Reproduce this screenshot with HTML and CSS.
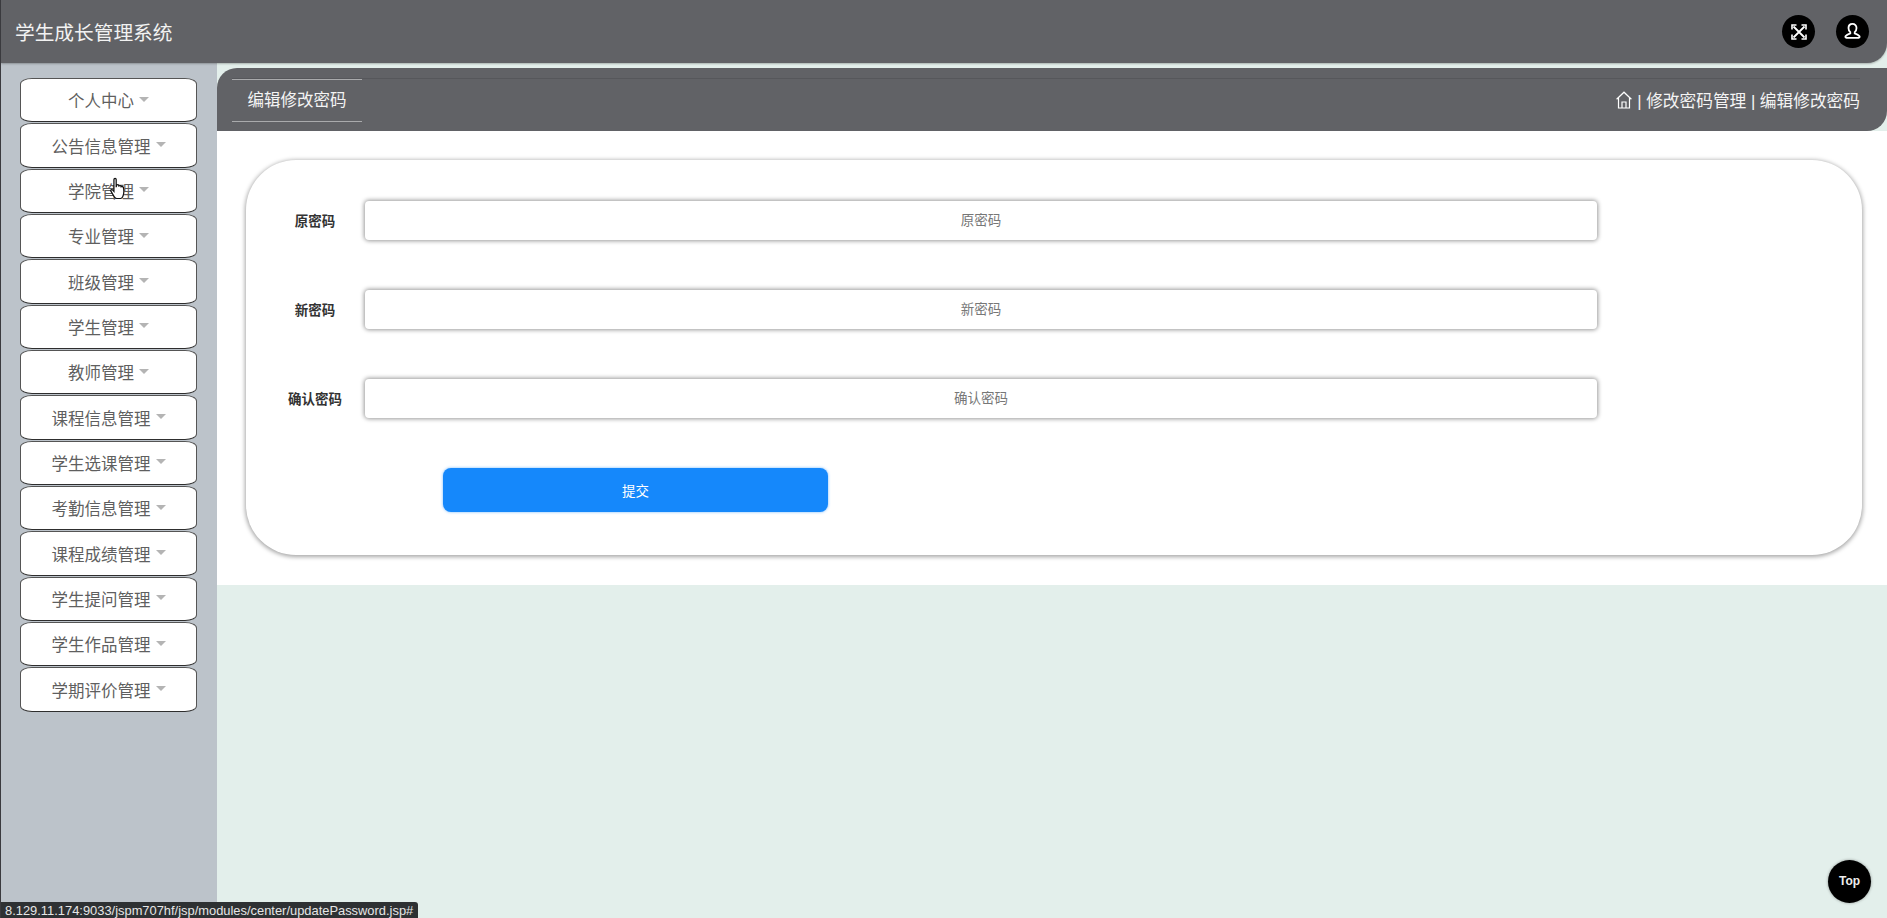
FILE: index.html
```html
<!DOCTYPE html>
<html lang="en">
<head>
  <meta charset="UTF-8">
  <meta name="viewport" content="width=device-width, initial-scale=1.0">
  <link rel="stylesheet" href="styles.css">
  <title>学生成长管理系统</title>
</head>
<body>
  <header class="topbar">
    <div class="brand">学生成长管理系统</div>
    <div class="top-actions">
      <span class="round-btn">
        <svg width="18" height="18" viewBox="0 0 18 18" fill="none" stroke="#fff" stroke-width="1.8">
          <path d="M3.500 3.500L14.500 14.500M14.500 3.500L3.500 14.500"/>
          <path d="M2 6.500V2H6.500M11.500 2H16V6.500M16 11.500V16H11.500M6.500 16H2V11.500" stroke-width="1.6"/>
        </svg>
      </span>
      <span class="round-btn">
        <svg width="19" height="19" viewBox="0 0 18 18" fill="none" stroke="#fff" stroke-width="1.7">
          <path d="M9 1.800c-2.300 0-3.800 1.700-3.800 3.900 0 1.600.7 3 1.700 3.900v1.200c-1.700.7-3.600 1.600-4.400 2.600-.5.7-.3 1.600.7 1.600h11.600c1 0 1.200-.9.7-1.600-.8-1-2.700-1.900-4.400-2.600V9.600c1-.9 1.700-2.300 1.700-3.900 0-2.200-1.500-3.900-3.800-3.900z"/>
        </svg>
      </span>
    </div>
  </header>

  <div class="layout">
    <nav class="sidebar">
      <a class="menu-item">个人中心<i class="caret"></i></a>
      <a class="menu-item">公告信息管理<i class="caret"></i></a>
      <a class="menu-item">学院管理<i class="caret"></i></a>
      <a class="menu-item">专业管理<i class="caret"></i></a>
      <a class="menu-item">班级管理<i class="caret"></i></a>
      <a class="menu-item">学生管理<i class="caret"></i></a>
      <a class="menu-item">教师管理<i class="caret"></i></a>
      <a class="menu-item">课程信息管理<i class="caret"></i></a>
      <a class="menu-item">学生选课管理<i class="caret"></i></a>
      <a class="menu-item">考勤信息管理<i class="caret"></i></a>
      <a class="menu-item">课程成绩管理<i class="caret"></i></a>
      <a class="menu-item">学生提问管理<i class="caret"></i></a>
      <a class="menu-item">学生作品管理<i class="caret"></i></a>
      <a class="menu-item">学期评价管理<i class="caret"></i></a>
    </nav>

    <main class="content">
      <div class="page-head">
        <div class="page-title">编辑修改密码</div>
        <div class="crumbs">
          <svg width="16" height="18" viewBox="0 0 16 18" fill="none" stroke="#fff" stroke-width="1.2">
            <path d="M.6 8.200L8 1.200l7.400 7M2.500 7v10h11V7M6 17v-6h4v6"/>
          </svg>
          <span>| 修改密码管理 | 编辑修改密码</span>
        </div>
      </div>

      <div class="panel">
        <form class="form-card">
          <div class="form-row">
            <label class="form-label">原密码</label>
            <input class="form-input" type="password" placeholder="原密码">
          </div>
          <div class="form-row">
            <label class="form-label">新密码</label>
            <input class="form-input" type="password" placeholder="新密码">
          </div>
          <div class="form-row">
            <label class="form-label">确认密码</label>
            <input class="form-input" type="password" placeholder="确认密码">
          </div>
          <button class="submit-btn" type="button">提交</button>
        </form>
      </div>
    </main>
  </div>

  <!-- mouse pointer caught in the screenshot -->
  <svg class="hand-cursor" width="18" height="25" viewBox="0 0 16 22" fill="#fff" stroke="#111" stroke-width="1.100">
    <path d="M3.500 2c0-1.300 2-1.300 2 0v7l.4-2c1.200-.5 1.900-.2 2 .8.900-.6 1.900-.3 2 .8.900-.5 1.900-.2 2 .8.600 2.500.6 5.500-.6 8.100-.4 1-1 1.500-2 1.500H6c-1 0-1.600-.5-2.200-1.500L.8 12.500c-.5-1 .7-2 1.700-1l1 1.200z"/>
  </svg>

  <div class="status-url">8.129.11.174:9033/jspm707hf/jsp/modules/center/updatePassword.jsp#</div>
  <a class="to-top">Top</a>
</body>
</html>
```

FILE: styles.css
```css
* {
    box-sizing: border-box;
}

html, body {
    height: 100%;
}

body {
    margin: 0;
    overflow: hidden;
    display: flex;
    flex-direction: column;
    font-family: "Liberation Sans", "Noto Sans CJK SC", sans-serif;
    background-color: #e3efeb;
    border-left: 1px solid #3a3a3e;
}

.topbar {
    flex: none;
    height: 63px;
    display: flex;
    justify-content: space-between;
    align-items: center;
    padding: 0 18px 0 14px;
    background-color: #616266;
    border-radius: 0 0 20px 0;
    box-shadow: 0 1px 2px rgba(0, 0, 0, 0.25);
    position: relative;
    z-index: 2;
}

.brand {
    color: #f2f2f2;
    font-size: 19.700px;
    padding-bottom: 1px;
}

.top-actions {
    display: flex;
    gap: 21px;
}

.round-btn {
    width: 33px;
    height: 33px;
    border-radius: 50%;
    background-color: #000;
    display: flex;
    justify-content: center;
    align-items: center;
}

.layout {
    flex: 1;
    display: flex;
    min-height: 0;
    background-color: #e3efeb;
}

.sidebar {
    flex: none;
    width: 216px;
    padding: 15px 20px 0 19px;
    display: flex;
    flex-direction: column;
    gap: 1px;
    background-color: #bcc3ca;
}

.menu-item {
    height: 44.350px;
    display: flex;
    justify-content: center;
    align-items: center;
    gap: 5px;
    color: #5f5f5f;
    font-size: 16.500px;
    background-color: #fff;
    border: 1px solid #555;
    border-bottom-color: #2e2e2e;
    border-radius: 12px / 6px;
}

.caret {
    width: 0;
    height: 0;
    margin-bottom: 2px;
    border-left: 5px solid transparent;
    border-right: 5px solid transparent;
    border-top: 5px solid #b4b4b4;
}

.content {
    flex: 1;
    min-width: 0;
    display: flex;
    flex-direction: column;
}

.page-head {
    flex: none;
    height: 63px;
    margin-top: 5px;
    display: flex;
    justify-content: space-between;
    align-items: center;
    padding: 0 27px 0 15px;
    background-color: #616266;
    border-radius: 20px 0 20px 0;
    color: #f4f4f4;
    font-size: 16.500px;
    position: relative;
}

/* faint rule running across the bar, level with the title's top border */
.page-head::before {
    content: "";
    position: absolute;
    left: 15px;
    right: 27px;
    top: 10px;
    height: 1px;
    background-color: #56575b;
}

.page-title {
    position: relative;
    width: 130px;
    height: 43px;
    margin-top: 1px;
    line-height: 41px;
    text-align: center;
    border-top: 1px solid #a9aaac;
    border-bottom: 1px solid #a9aaac;
}

.crumbs {
    display: flex;
    align-items: center;
    gap: 5px;
    font-size: 16.700px;
}

.panel {
    flex: none;
    height: 454px;
    padding: 29px 25px 0 29px;
    background-color: #fff;
}

.form-card {
    height: 395px;
    padding: 41px 0 0;
    background-color: #fff;
    border-radius: 50px;
    box-shadow: 0 1px 4px 1px rgba(0, 0, 0, 0.35);
}

.form-row {
    display: flex;
    align-items: center;
    height: 39px;
    margin-bottom: 50px;
}

.form-label {
    flex: none;
    width: 118px;
    padding: 0 0 2px 20px;
    text-align: center;
    color: #333;
    font-size: 13.500px;
    font-weight: bold;
}

.form-input {
    width: 1232px;
    height: 39px;
    margin-left: 1px;
    padding: 0 10px;
    text-align: center;
    font-family: inherit;
    font-size: 13.500px;
    background-color: #fff;
    border: none;
    border-radius: 4px;
    box-shadow: 0 0 4px 1px rgba(0, 0, 0, 0.4);
}

.form-input::placeholder {
    color: #777;
}

.submit-btn {
    display: block;
    width: 385px;
    height: 44px;
    margin: 35px 0 0 197px;
    color: #fff;
    font-family: inherit;
    font-size: 13.500px;
    background-color: #1588fb;
    border: none;
    border-radius: 8px;
    box-shadow: 0 0 3px rgba(21, 136, 251, 0.6);
}

.hand-cursor {
    position: absolute;
    left: 110px;
    top: 177px;
}

.status-url {
    position: absolute;
    left: 1px;
    bottom: 0;
    height: 16px;
    width: 417px;
    padding-left: 4px;
    line-height: 17px;
    white-space: nowrap;
    color: #e6e6e6;
    font-size: 12.900px;
    background-color: #2e3133;
    border-radius: 0 3px 0 0;
}

.to-top {
    position: absolute;
    right: 16px;
    bottom: 15px;
    width: 43px;
    height: 43px;
    line-height: 43px;
    text-align: center;
    color: #eee;
    font-size: 12px;
    font-weight: bold;
    background-color: #000;
    border-radius: 50%;
    box-shadow: 0 0 3px rgba(0, 0, 0, 0.4);
}
```
